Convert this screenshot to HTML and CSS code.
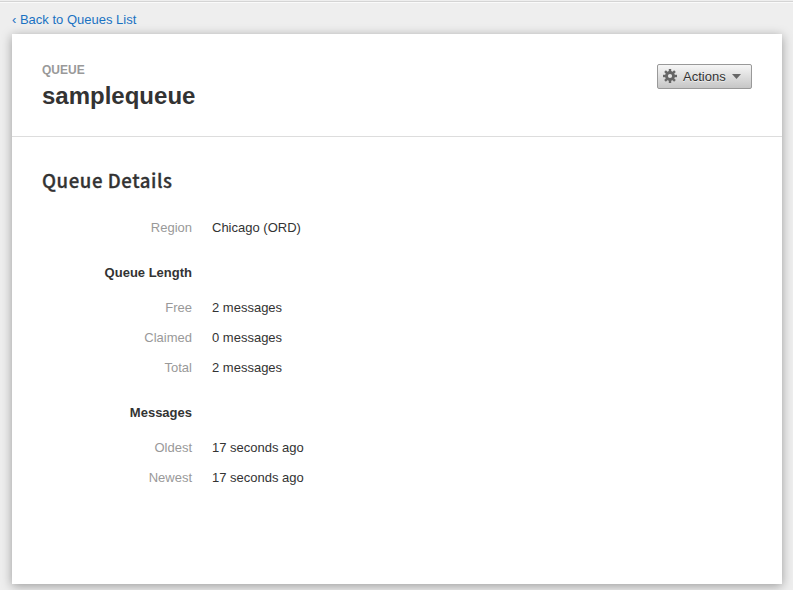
FILE: index.html
```html
<!DOCTYPE html>
<html lang="en">
<head>
<meta charset="utf-8">
<title>samplequeue</title>
<link rel="stylesheet" href="styles.css">
</head>
<body>
<a class="back" href="#">‹ Back to Queues List</a>
<main class="panel">
  <header class="header">
    <div>
      <div class="kind">QUEUE</div>
      <h1>samplequeue</h1>
    </div>
    <button class="actions" type="button">
      <svg class="gear" viewBox="0 0 14 14"><g fill="#666"><rect x="5.8" y="0" width="2.4" height="14"/><rect x="5.8" y="0" width="2.4" height="14" transform="rotate(45 7 7)"/><rect x="5.8" y="0" width="2.4" height="14" transform="rotate(90 7 7)"/><rect x="5.8" y="0" width="2.4" height="14" transform="rotate(135 7 7)"/><circle cx="7" cy="7" r="4.9"/></g><circle cx="7" cy="7" r="2.1" fill="#e4e4e4"/></svg>
      <span>Actions</span>
      <svg class="caret" viewBox="0 0 9 5"><path d="M0 0h9L4.5 5z" fill="#666"/></svg>
    </button>
  </header>
  <section class="details">
    <h2>Queue Details</h2>
    <dl><dt>Region</dt><dd>Chicago (ORD)</dd></dl>
    <h3>Queue Length</h3>
    <dl><dt>Free</dt><dd>2 messages</dd><dt>Claimed</dt><dd>0 messages</dd><dt>Total</dt><dd>2 messages</dd></dl>
    <h3>Messages</h3>
    <dl><dt>Oldest</dt><dd>17 seconds ago</dd><dt>Newest</dt><dd>17 seconds ago</dd></dl>
  </section>
</main>
</body>
</html>
```
FILE: styles.css
```css
* { box-sizing: border-box; }
body {
  margin: 0;
  height: 590px;
  overflow: hidden;
  padding: 9px 11px 0 12px;
  border-top: 1px solid #eee;
  background: #eee;
  box-shadow: inset 0 1px #d4d4d4, inset 0 2px #fafafa;
  color: #333;
  font: 13px/20px "Liberation Sans", Arial, sans-serif;
}
.back { display: block; height: 24px; color: #1a72c2; text-decoration: none; }
.panel { height: 550px; background: #fff; box-shadow: 0 2px 10px rgba(0,0,0,.35); }
.header {
  display: flex;
  justify-content: space-between;
  align-items: flex-start;
  height: 103px;
  padding: 26px 30px 0;
  border-bottom: 1px solid #ddd;
}
.kind { color: #999; font-size: 12px; font-weight: bold; }
h1 { margin: 1px 0 0; font-size: 24px; line-height: 30px; }
.actions {
  display: flex;
  align-items: center;
  width: 95px;
  height: 25px;
  margin-top: 4px;
  padding: 0 10px 0 5px;
  border: 1px solid #999;
  border-radius: 2px;
  background: linear-gradient(#f6f6f6, #c6c6c6);
  color: #333;
  font: inherit;
  text-shadow: 0 1px rgba(255,255,255,.6);
}
.gear { width: 14px; height: 14px; margin: 0 6px 2px 0; }
.caret { width: 9px; height: 5px; margin-left: auto; }
.details { padding: 28px 30px 0; }
h2 {
  margin: 0 0 18px;
  font: 500 18.6px/30px "Noto Sans CJK JP", "Noto Sans", sans-serif;
  letter-spacing: .58px;
  -webkit-text-stroke: .3px #333;
}
dl { display: grid; grid-template-columns: 150px 1fr; column-gap: 20px; grid-auto-rows: 30px; margin: 0; line-height: 30px; }
dt { color: #999; text-align: right; }
dd { margin: 0; }
h3 { width: 150px; margin: 15px 0 5px; font-size: 13px; line-height: 30px; text-align: right; }
```
